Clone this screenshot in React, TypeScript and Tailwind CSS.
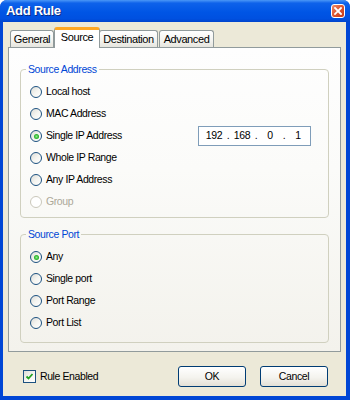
import React from 'react';

type RadioProps = {
  label: string;
  checked?: boolean;
  disabled?: boolean;
  children?: React.ReactNode;
};

const Radio = ({ label, checked, disabled, children }: RadioProps) => (
  <div className="flex items-center h-[22px]">
    <span
      className={
        disabled
          ? 'w-[12px] h-[12px] rounded-full border border-[#CAC8BB] bg-white flex items-center justify-center'
          : 'w-[12px] h-[12px] rounded-full border border-[#1C5180] bg-[linear-gradient(135deg,#DCDCD7_0%,#F4F4F0_50%,#FFFFFF_100%)] flex items-center justify-center'
      }
    >
      {checked && (
        <span className="w-[5px] h-[5px] rounded-full bg-[radial-gradient(circle,#8EEA8E_0%,#2BB52B_60%,#1E921E_100%)]" />
      )}
    </span>
    <span className={disabled ? 'ml-[4px] text-[#ACA899]' : 'ml-[4px] text-black'}>{label}</span>
    {children}
  </div>
);

const tabs = [
  { name: 'General', w: 'w-[44px]' },
  { name: 'Source', w: 'w-[46px]' },
  { name: 'Destination', w: 'w-[59px]' },
  { name: 'Advanced', w: 'w-[55px]' },
];

export default function App() {
  return (
    <div className="w-[350px] h-[400px] flex flex-col rounded-t-[7px] overflow-hidden bg-[#0046D5] font-['Liberation_Sans',Arial,sans-serif] text-[10.5px] tracking-[-0.4px] select-none">
      {/* title bar */}
      <div className="h-[22px] shrink-0 flex items-center justify-between pl-[6px] pr-[5px] bg-[linear-gradient(180deg,#4A97F7_0%,#0E62EA_14%,#0055E5_55%,#0050E0_85%,#0044CC_100%)]">
        <span className="text-white font-bold text-[13px] tracking-[-0.3px] [text-shadow:1px_1px_0_#0A2A80]">Add Rule</span>
        <span className="w-[14px] h-[14px] rounded-[3px] border border-white bg-[linear-gradient(135deg,#EE8A6A_0%,#DC5430_50%,#C23A18_100%)] flex items-center justify-center">
          <svg width="8" height="8" viewBox="0 0 8 8">
            <path d="M1 1 L7 7 M7 1 L1 7" stroke="white" strokeWidth="1.8" strokeLinecap="square" />
          </svg>
        </span>
      </div>

      {/* body */}
      <div className="flex-1 flex flex-col ml-[3px] mr-[4px] mb-[4px] bg-[#ECE9D8] px-[5px]">
        {/* tabs */}
        <div className="flex items-end h-[25px] pl-[2px] relative z-10">
          {tabs.map((t, i) =>
            i === 1 ? (
              <div
                key={t.name}
                className={`${t.w} h-[21px] -mb-px -mx-[1px] flex items-center justify-center bg-white border border-b-0 border-[#919B9C] border-t-[3px] border-t-[#FFA824] rounded-t-[3px] pb-[3px] text-[11px]`}
              >
                {t.name}
              </div>
            ) : (
              <div
                key={t.name}
                className={`${t.w} h-[17px] flex items-center justify-center mr-[1px] bg-[linear-gradient(180deg,#FFFFFF_0%,#F3F3EF_60%,#E6E5DE_100%)] border border-b-0 border-[#919B9C] rounded-t-[3px] text-[11px] whitespace-nowrap`}
              >
                {t.name}
              </div>
            )
          )}
        </div>

        {/* tab panel */}
        <div className="h-[305px] border border-[#919B9C] bg-[linear-gradient(180deg,#FEFEFE_0%,#FBFBF9_40%,#F3F2EC_100%)] px-[11px] pt-[15px]">
          <fieldset className="border border-[#D0D0BF] rounded-[4px] pl-[9px] pb-[5px] h-[155px]">
            <legend className="ml-[-4px] px-[2px] text-[#0046D5] leading-[12px]">Source Address</legend>
            <div className="pt-[6px]">
              <Radio label="Local host" />
              <Radio label="MAC Address" />
              <Radio label="Single IP Address" checked>
                <div className="ml-auto mr-[17px] w-[113px] h-[20px] border border-[#7F9DB9] bg-white flex items-center pl-[6px] text-[10.5px]">
                  <span className="w-[18px] text-center">192</span>
                  <span className="w-[10px] text-center">.</span>
                  <span className="w-[18px] text-center">168</span>
                  <span className="w-[10px] text-center">.</span>
                  <span className="w-[18px] text-center">0</span>
                  <span className="w-[10px] text-center">.</span>
                  <span className="w-[18px] text-center">1</span>
                </div>
              </Radio>
              <Radio label="Whole IP Range" />
              <Radio label="Any IP Address" />
              <Radio label="Group" disabled />
            </div>
          </fieldset>

          <fieldset className="mt-[10px] border border-[#D0D0BF] rounded-[4px] pl-[9px] h-[115px]">
            <legend className="ml-[-4px] px-[2px] text-[#0046D5] leading-[12px]">Source Port</legend>
            <div className="pt-[6px]">
              <Radio label="Any" checked />
              <Radio label="Single port" />
              <Radio label="Port Range" />
              <Radio label="Port List" />
            </div>
          </fieldset>
        </div>

        {/* footer */}
        <div className="flex items-center justify-between pt-[14px] pl-[15px] pr-[13px]">
          <div className="flex items-center">
            <span className="w-[13px] h-[13px] border border-[#1C5180] bg-[linear-gradient(135deg,#DCDCD7_0%,#F4F4F0_50%,#FFFFFF_100%)] flex items-center justify-center">
              <svg width="9" height="9" viewBox="0 0 9 9">
                <path d="M1.5 4.5 L3.5 6.5 L7.5 2" fill="none" stroke="#21A121" strokeWidth="1.8" />
              </svg>
            </span>
            <span className="ml-[4px]">Rule Enabled</span>
          </div>
          <div className="flex gap-[14px]">
            <button className="w-[68px] h-[21px] rounded-[3px] border border-[#003C74] bg-[linear-gradient(180deg,#FFFFFF_0%,#F4F3EE_55%,#E3E0D6_100%)] text-[10.5px]">
              OK
            </button>
            <button className="w-[68px] h-[21px] rounded-[3px] border border-[#003C74] bg-[linear-gradient(180deg,#FFFFFF_0%,#F4F3EE_55%,#E3E0D6_100%)] text-[10.5px]">
              Cancel
            </button>
          </div>
        </div>
      </div>
    </div>
  );
}
